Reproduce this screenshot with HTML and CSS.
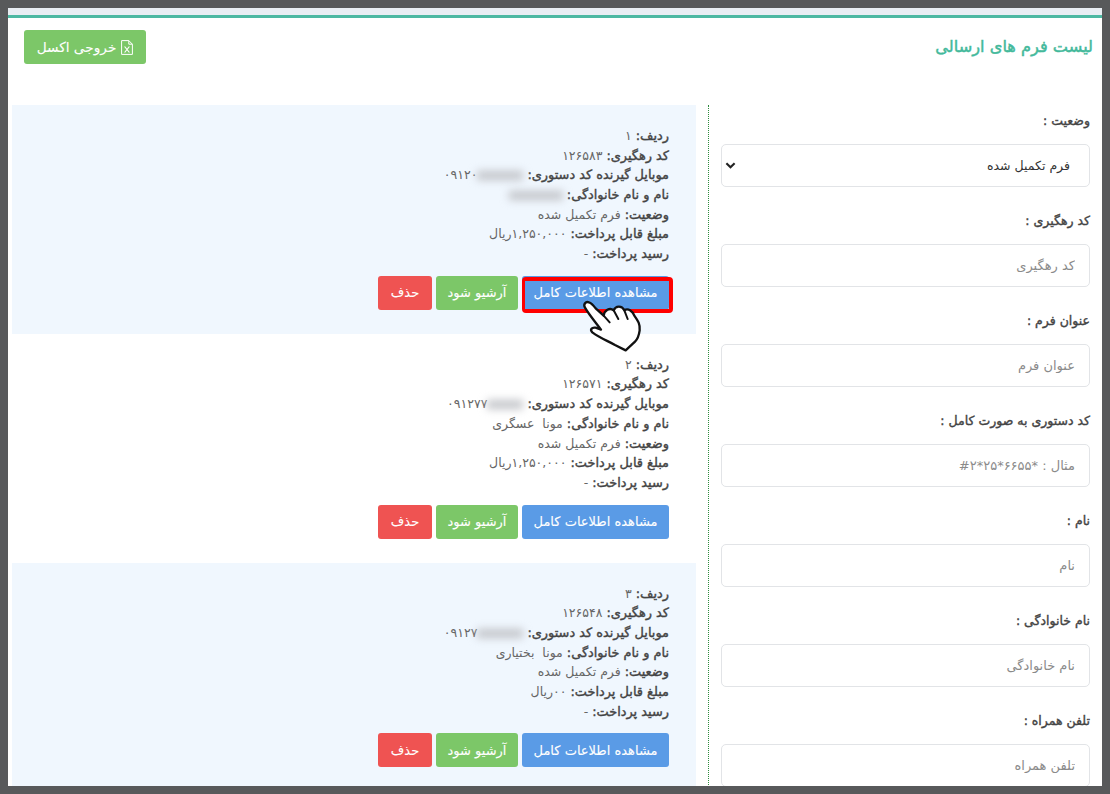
FILE: index.html
```html
<!DOCTYPE html>
<html lang="fa" dir="rtl">
<head>
<meta charset="utf-8">
<title>لیست فرم های ارسالی</title>
<link rel="stylesheet" href="styles.css">
</head>
<body>
<div class="frame">
  <div class="strip"></div>
  <header class="head">
    <h1 class="title">لیست فرم های ارسالی</h1>
    <a class="btn green export"><svg class="xls" viewBox="0 0 12 15" width="12" height="15"><path d="M.6 .6H7.8L11.4 4.2V14.4H.6Z M7.8 .6V4.2H11.4" fill="none" stroke="#fff" stroke-width="1"/><path d="M3.6 6.5L8.4 12.5M8.4 6.5L3.6 12.5" fill="none" stroke="#fff" stroke-width="1.2"/></svg>خروجی اکسل</a>
  </header>
  <div class="main">
    <aside class="filters">
      <div class="group"><label class="lbl">وضعیت :</label>
        <div class="field select"><span>فرم تکمیل شده</span><svg class="chev" viewBox="0 0 12 8" width="11" height="7"><path d="M1.3 1.3L6 6L10.7 1.3" fill="none" stroke="#222" stroke-width="2.4"/></svg></div></div>
      <div class="group"><label class="lbl">کد رهگیری :</label><input class="field" placeholder="کد رهگیری"></div>
      <div class="group"><label class="lbl">عنوان فرم :</label><input class="field" placeholder="عنوان فرم"></div>
      <div class="group"><label class="lbl">کد دستوری به صورت کامل :</label><input class="field" placeholder="مثال : *۶۶۵۵*۲۵*۲#"></div>
      <div class="group"><label class="lbl">نام :</label><input class="field" placeholder="نام"></div>
      <div class="group"><label class="lbl">نام خانوادگی :</label><input class="field" placeholder="نام خانوادگی"></div>
      <div class="group"><label class="lbl">تلفن همراه :</label><input class="field" placeholder="تلفن همراه"></div>
    </aside>
    <section class="list">
      <article class="card tint">
        <p><b>ردیف:</b> ۱</p>
        <p><b>کد رهگیری:</b> ۱۲۶۵۸۳</p>
        <p><b>موبایل گیرنده کد دستوری:</b> <bdi dir="ltr">۰۹۱۲۰<span class="blur w1"></span></bdi></p>
        <p><b>نام و نام خانوادگی:</b> <span class="blur w2"></span></p>
        <p><b>وضعیت:</b> فرم تکمیل شده</p>
        <p><b>مبلغ قابل پرداخت:</b> ۱,۲۵۰,۰۰۰ریال</p>
        <p><b>رسید پرداخت:</b> -</p>
        <div class="actions"><a class="btn blue marked">مشاهده اطلاعات کامل</a><a class="btn green">آرشیو شود</a><a class="btn red">حذف</a></div>
      </article>
      <article class="card">
        <p><b>ردیف:</b> ۲</p>
        <p><b>کد رهگیری:</b> ۱۲۶۵۷۱</p>
        <p><b>موبایل گیرنده کد دستوری:</b> <bdi dir="ltr">۰۹۱۲۷۷<span class="blur w3"></span></bdi></p>
        <p><b>نام و نام خانوادگی:</b> مونا&nbsp; عسگری</p>
        <p><b>وضعیت:</b> فرم تکمیل شده</p>
        <p><b>مبلغ قابل پرداخت:</b> ۱,۲۵۰,۰۰۰ریال</p>
        <p><b>رسید پرداخت:</b> -</p>
        <div class="actions"><a class="btn blue">مشاهده اطلاعات کامل</a><a class="btn green">آرشیو شود</a><a class="btn red">حذف</a></div>
      </article>
      <article class="card tint">
        <p><b>ردیف:</b> ۳</p>
        <p><b>کد رهگیری:</b> ۱۲۶۵۴۸</p>
        <p><b>موبایل گیرنده کد دستوری:</b> <bdi dir="ltr">۰۹۱۲۷<span class="blur w1"></span></bdi></p>
        <p><b>نام و نام خانوادگی:</b> مونا&nbsp; بختیاری</p>
        <p><b>وضعیت:</b> فرم تکمیل شده</p>
        <p><b>مبلغ قابل پرداخت:</b> ۰۰ریال</p>
        <p><b>رسید پرداخت:</b> -</p>
        <div class="actions"><a class="btn blue">مشاهده اطلاعات کامل</a><a class="btn green">آرشیو شود</a><a class="btn red">حذف</a></div>
      </article>
    </section>
  </div>
  <svg class="hand" viewBox="0 0 225 210" width="75" height="70">
    <path d="M30 68C24 58 32 48 42 52C50 54 56 62 62 70L86 92C88 76 104 66 116 76C122 62 140 60 148 76C160 68 174 80 178 92C188 106 196 116 194 136C192 150 188 162 180 170L152 196L120 180C100 168 76 160 52 142C44 134 50 126 62 128L78 134C62 112 44 92 30 68Z" fill="#fff" stroke="#111" stroke-width="7" stroke-linejoin="round"/>
    <path d="M86 92L104 112M116 76L130 102M148 76L158 102" fill="none" stroke="#111" stroke-width="6" stroke-linecap="round"/>
  </svg>
</div>
</body>
</html>
```
FILE: styles.css
```css
* { box-sizing: border-box; }
html, body { margin: 0; height: 100%; }
body { background: #58595b; padding: 8px; overflow: hidden; font-family: "DejaVu Sans", sans-serif; font-size: 12.5px; color: #555; }
.frame { position: relative; height: 778px; background: #fff; overflow: hidden; }
.strip { height: 10px; background: #e9edf3; border-bottom: 3px solid #4db8a2; }
.head { display: flex; justify-content: space-between; align-items: flex-start; padding: 12px 9px 0 0; margin-left: 16px; height: 87px; }
.title { margin: 5px 0 0; font-size: 16.2px; font-weight: normal; -webkit-text-stroke: .45px #43b99b; color: #43b99b; line-height: 24px; }
.main { display: flex; align-items: stretch; }
.filters { width: 394px; padding: 0 12px; border-left: 1px dotted #2e8b3d; }
.group { height: 100px; padding-top: 6px; }
.lbl { display: block; height: 33px; line-height: 19px; color: #444; font-size: 12.5px; -webkit-text-stroke: .4px #444; }
.field { display: flex; align-items: center; justify-content: space-between; width: 369px; height: 43px; padding: 0 14px; background: #fff; border: 1px solid #e2e4e7; border-radius: 5px; font: 13px "DejaVu Sans", sans-serif; color: #333; outline: none; }
.field::placeholder { color: #8a8a8a; }
.select { padding: 0 19px 0 3px; font-size: 12.5px; }
.list { width: 696px; padding-right: 12px; }
.card { width: 684px; height: 228.75px; padding: 21px 27px 0 0; }
.tint { background: #f0f7fe; }
.card p { margin: 0; line-height: 19.7px; height: 19.7px; color: #666; white-space: nowrap; }
.card b { color: #444; font-weight: normal; font-size: 12.9px; -webkit-text-stroke: .4px #444; }
.blur { display: inline-block; height: 9px; background: #c2c4c8; filter: blur(4px); vertical-align: middle; }
.w1 { width: 46px; }
.w2 { width: 54px; }
.w3 { width: 36px; }
.actions { display: flex; gap: 4px; margin-top: 12px; }
.btn { display: inline-flex; align-items: center; justify-content: center; height: 34px; border-radius: 3px; color: #fff; font-size: 13px; -webkit-text-stroke: .1px #fff; }
.blue { width: 147px; background: #5a9be6; }
.green { width: 82px; background: #7cc768; }
.red { width: 54px; background: #ef5352; }
.export { width: 122px; gap: 5px; font-size: 13.7px; }
.marked { position: relative; }
.marked::after { content: ""; position: absolute; top: 1px; bottom: -3px; left: 0; right: -4px; border: 4px solid #f00; border-left-width: 3px; border-radius: 4px; }
.hand { position: absolute; left: 567px; top: 277px; }
```
